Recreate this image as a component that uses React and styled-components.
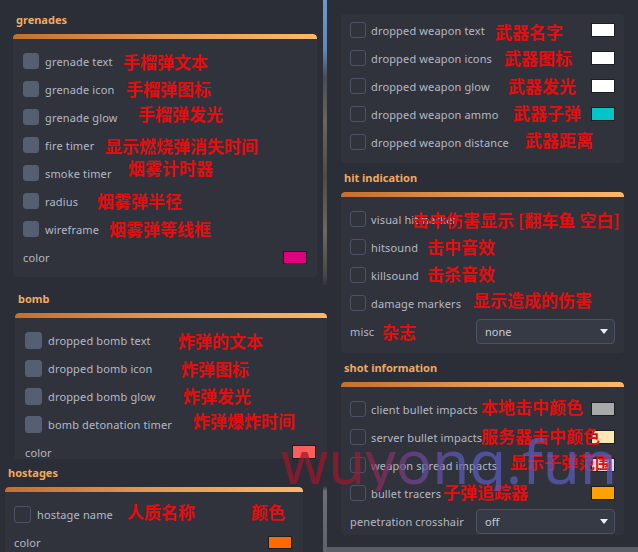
import React from 'react'
import styled, { createGlobalStyle } from 'styled-components'

const GlobalStyle = createGlobalStyle`
  html, body {
    margin: 0;
    padding: 0;
    background: #5a5e64;
  }
  body {
    font-family: "Noto Sans", "DejaVu Sans", sans-serif;
  }
`

const Screen = styled.div`
  position: relative;
  width: 638px;
  height: 552px;
  overflow: hidden;
  display: grid;
  grid-template-columns: 323px 4px 311px;
  align-items: start;
  background: #5a5e64;
`

const LeftColumn = styled.div`
  display: flex;
  flex-direction: column;
  height: 552px;
  position: relative;
  z-index: 1;
`

const Strip = styled.div`
  height: 552px;
  background: linear-gradient(
    180deg,
    #7098cc 0%,
    #6286b8 9%,
    #474d55 14%,
    #6a655e 22%,
    #4e4b47 32%,
    #6a6864 42%,
    #45464a 50%,
    #2b2e36 52%,
    #2b2e36 88%,
    #6b7075 89%,
    #5f6368 100%
  );
`

const Window = styled.div`
  background: #2b2e36;
  padding: ${p => p.$pad};
  height: ${p => p.$h}px;
  margin-right: ${p => p.$mr || 0}px;
  box-sizing: border-box;
  overflow: hidden;
  flex-shrink: 0;
`

const RightWindow = styled.div`
  background: #2b2e36;
  height: 547px;
  box-sizing: border-box;
  padding: 14px 14px 0 14px;
  display: flex;
  flex-direction: column;
`

const Section = styled.div`
  margin-top: ${p => p.$mt || 0}px;
`

const Title = styled.div`
  color: #f0a95f;
  font-size: 11px;
  font-weight: 700;
  line-height: 14px;
  padding-left: 3px;
  margin-bottom: 7px;
`

const Group = styled.div`
  background: #30333c;
  border-radius: 4px;
  overflow: hidden;
`

const Bar = styled.div`
  height: 5px;
  border-radius: 4px 4px 0 0;
  background: linear-gradient(90deg, #c56f2d 0%, #e59a52 50%, #fdb766 100%);
`

const Body = styled.div`
  padding: ${p => p.$pad};
`

const Row = styled.div`
  position: relative;
  height: 28px;
  display: flex;
  align-items: center;
`

const Check = styled.div`
  width: ${p => p.$size || 16}px;
  height: ${p => p.$size || 16}px;
  box-sizing: border-box;
  border-radius: 3px;
  flex-shrink: 0;
  background: ${p => (p.$filled ? '#565e72' : 'transparent')};
  border: 1px solid ${p => (p.$filled ? '#565e72' : '#4c5366')};
`

const Label = styled.span`
  color: #b5b9c5;
  font-size: 11px;
  letter-spacing: 0.15px;
  margin-left: ${p => p.$gap ?? 6}px;
  white-space: nowrap;
`

const Swatch = styled.div`
  margin-left: auto;
  width: 24px;
  height: ${p => p.$h || 13}px;
  box-sizing: border-box;
  border: 1px solid #1c1e24;
  background: ${p => p.$color};
`

const Select = styled.div`
  margin-left: auto;
  width: 139px;
  height: 25px;
  box-sizing: border-box;
  border: 1px solid #4c5265;
  border-radius: 4px;
  background: #363a45;
  display: flex;
  align-items: center;
  justify-content: space-between;
  padding: 0 6px 0 8px;
  color: #c9ccd5;
  font-size: 11px;
`

const Caret = styled.span`
  width: 0;
  height: 0;
  border-left: 4px solid transparent;
  border-right: 4px solid transparent;
  border-top: 5px solid #eceef3;
`

const Note = styled.span`
  position: absolute;
  left: ${p => p.$x}px;
  top: 50%;
  transform: translateY(calc(-50% + ${p => p.$dy || 0}px));
  color: #e50d0d;
  font-family: "Noto Sans CJK SC", "Noto Sans", sans-serif;
  font-size: 17px;
  font-weight: 700;
  line-height: 20px;
  white-space: pre;
  pointer-events: none;
`

const Watermark = styled.div`
  position: absolute;
  left: 281px;
  top: 431px;
  z-index: 5;
  font-family: "Noto Sans", sans-serif;
  font-size: 60px;
  line-height: 60px;
  background: linear-gradient(
    90deg,
    rgba(160, 22, 42, 0.72) 0%,
    rgba(160, 22, 42, 0.72) 20%,
    rgba(110, 70, 150, 0.72) 40%,
    rgba(92, 92, 190, 0.72) 55%,
    rgba(92, 92, 190, 0.72) 100%
  );
  -webkit-background-clip: text;
  background-clip: text;
  color: transparent;
  pointer-events: none;
`

const grenades = [
  { label: 'grenade text', note: '手榴弹文本', x: 100, dy: 1 },
  { label: 'grenade icon', note: '手榴弹图标', x: 103, dy: 0 },
  { label: 'grenade glow', note: '手榴弹发光', x: 115, dy: -3 },
  { label: 'fire timer', note: '显示燃烧弹消失时间', x: 82, dy: 1 },
  { label: 'smoke timer', note: '烟雾计时器', x: 105, dy: -5 },
  { label: 'radius', note: '烟雾弹半径', x: 74, dy: 0 },
  { label: 'wireframe', note: '烟雾弹等线框', x: 86, dy: 0 },
]

const bomb = [
  { label: 'dropped bomb text', note: '炸弹的文本', x: 153, dy: 1 },
  { label: 'dropped bomb icon', note: '炸弹图标', x: 156, dy: 1 },
  { label: 'dropped bomb glow', note: '炸弹发光', x: 158, dy: 0 },
  { label: 'bomb detonation timer', note: '炸弹爆炸时间', x: 168, dy: -3 },
]

const weapons = [
  { label: 'dropped weapon text', note: '武器名字', x: 145, dy: 2, color: '#ffffff' },
  { label: 'dropped weapon icons', note: '武器图标', x: 154, dy: 0, color: '#ffffff' },
  { label: 'dropped weapon glow', note: '武器发光', x: 158, dy: 0, color: '#ffffff' },
  { label: 'dropped weapon ammo', note: '武器子弹', x: 163, dy: -1, color: '#00c6c8' },
  { label: 'dropped weapon distance', note: '武器距离', x: 175, dy: -2 },
]

const hits = [
  { label: 'visual hitmarker', note: '击中伤害显示 [翻车鱼 空白]', x: 62, dy: 1 },
  { label: 'hitsound', note: '击中音效', x: 77, dy: 0 },
  { label: 'killsound', note: '击杀音效', x: 77, dy: -1 },
  { label: 'damage markers', note: '显示造成的伤害', x: 123, dy: -3 },
]

const shots = [
  { label: 'client bullet impacts', note: '本地击中颜色', x: 131, dy: -2, color: '#a9a9a9' },
  { label: 'server bullet impacts', note: '服务器击中颜色', x: 131, dy: -1, color: '#ffe7b3' },
  { label: 'weapon spread impacts', note: '显示子弹范围', x: 160, dy: -3, color: '#e4e0f4' },
  { label: 'bullet tracers', note: '子弹追踪器', x: 93, dy: -1, color: '#ffa100' },
]

const CheckRow = ({ item, filled, size, gap, children }) => (
  <Row>
    <Check $filled={filled} $size={size} />
    <Label $gap={gap}>{item.label}</Label>
    {item.color && <Swatch $color={item.color} $h={14} />}
    <Note $x={item.x} $dy={item.dy}>{item.note}</Note>
    {children}
  </Row>
)

const ColorRow = ({ color, h }) => (
  <Row>
    <Label $gap={0}>color</Label>
    <Swatch $color={color} $h={h} />
  </Row>
)

export default function App() {
  return (
    <>
      <GlobalStyle />
      <Screen>
        <LeftColumn>
          <Window $pad="13px 6px 0 13px" $h={285}>
            <Title>grenades</Title>
            <Group>
              <Bar />
              <Body $pad="8px 10px 6px 10px">
                {grenades.map(g => (
                  <CheckRow key={g.label} item={g} filled />
                ))}
                <ColorRow color="#e0007f" />
              </Body>
            </Group>
          </Window>
          <Window $pad="7px 0 0 15px" $h={174} $mr={-4}>
            <Title>bomb</Title>
            <Group>
              <Bar />
              <Body $pad="8px 11px 6px 10px">
                {bomb.map(b => (
                  <CheckRow key={b.label} item={b} filled size={17} />
                ))}
                <ColorRow color="#ff5c5c" h={14} />
              </Body>
            </Group>
          </Window>
          <Window $pad="7px 20px 0 5px" $h={93}>
            <Title>hostages</Title>
            <Group>
              <Bar />
              <Body $pad="8px 11px 6px 9px">
                <CheckRow item={{ label: 'hostage name', note: '人质名称', x: 113, dy: -2 }} size={17}>
                  <Note $x={237} $dy={-2}>颜色</Note>
                </CheckRow>
                <ColorRow color="#ff6a00" />
              </Body>
            </Group>
          </Window>
        </LeftColumn>
        <Strip />
        <RightWindow>
          <Group>
            <Body $pad="2px 9px 7px 9px">
              {weapons.map(w => (
                <CheckRow key={w.label} item={w} gap={5} />
              ))}
            </Body>
          </Group>
          <Section $mt={8}>
            <Title>hit indication</Title>
            <Group>
              <Bar />
              <Body $pad="8px 9px 8px 9px">
                {hits.map(h => (
                  <CheckRow key={h.label} item={h} gap={5} />
                ))}
                <Row>
                  <Label $gap={0}>misc</Label>
                  <Note $x={32} $dy={1}>杂志</Note>
                  <Select>
                    none
                    <Caret />
                  </Select>
                </Row>
              </Body>
            </Group>
          </Section>
          <Section $mt={8}>
            <Title>shot information</Title>
            <Group>
              <Bar />
              <Body $pad="8px 9px 0 9px">
                {shots.map(s => (
                  <CheckRow key={s.label} item={s} gap={5} />
                ))}
                <Row>
                  <Label $gap={0}>penetration crosshair</Label>
                  <Select>
                    off
                    <Caret />
                  </Select>
                </Row>
              </Body>
            </Group>
          </Section>
        </RightWindow>
        <Watermark>wuyong.fun</Watermark>
      </Screen>
    </>
  )
}
